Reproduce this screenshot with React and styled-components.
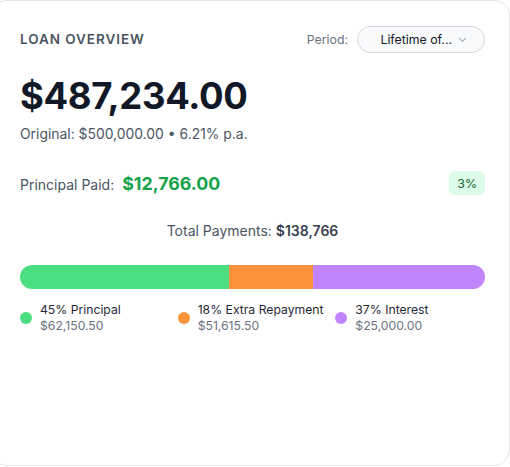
import React from "react";
import styled, { createGlobalStyle } from "styled-components";

const Global = createGlobalStyle`
  html, body { margin: 0; padding: 0; background: #ffffff; }
  body { font-family: Inter, "Noto Sans", sans-serif; overflow: hidden; }
  * { box-sizing: border-box; }
`;

const Card = styled.div`
  margin-left: -10px;
  width: 520px;
  height: 466px;
  background: #fff;
  border: 1px solid #e5e7eb;
  border-radius: 16px;
  padding: 24px 24px 24px 29px;
  display: flex;
  flex-direction: column;
`;

const Header = styled.div`
  display: flex;
  align-items: center;
  justify-content: space-between;
  height: 28px;
`;

const Title = styled.h2`
  margin: 0;
  font-size: 13.5px;
  font-weight: 600;
  letter-spacing: 0.07em;
  color: #4b5563;
  text-transform: uppercase;
`;

const PeriodWrap = styled.div`
  display: flex;
  align-items: center;
  gap: 9px;
`;

const PeriodLabel = styled.span`
  font-size: 12.3px;
  color: #6b7280;
`;

const Select = styled.div`
  width: 128px;
  height: 27px;
  border: 1px solid #d1d5db;
  border-radius: 14px;
  background: #f9fafb;
  display: flex;
  align-items: center;
  justify-content: flex-end;
  padding-right: 17px;
  gap: 6px;
  font-size: 12.3px;
  color: #111827;
`;

const Amount = styled.div`
  margin-top: 21px;
  font-size: 36.5px;
  line-height: 44px;
  font-weight: 700;
  color: #111827;
  letter-spacing: -0.01em;
`;

const Sub = styled.div`
  margin-top: 6px;
  font-size: 13.9px;
  line-height: 20px;
  color: #4b5563;
`;

const PaidRow = styled.div`
  margin-top: 27px;
  display: flex;
  align-items: center;
  justify-content: space-between;
  height: 24px;
`;

const PaidLeft = styled.div`
  display: flex;
  align-items: baseline;
  gap: 8px;
`;

const PaidLabel = styled.span`
  font-size: 14px;
  color: #4b5563;
`;

const PaidValue = styled.span`
  font-size: 17.8px;
  font-weight: 700;
  color: #16a34a;
`;

const Badge = styled.span`
  height: 24px;
  padding: 0 8px;
  display: inline-flex;
  align-items: center;
  border-radius: 6px;
  background: #dcfce7;
  color: #166534;
  font-size: 12.3px;
`;

const Total = styled.div`
  margin-top: 26px;
  text-align: center;
  font-size: 14px;
  line-height: 20px;
  color: #4b5563;
  b { font-weight: 600; color: #374151; }
`;

const Bar = styled.div`
  margin-top: 24px;
  height: 24px;
  border-radius: 12px;
  overflow: hidden;
  display: flex;
`;

const Segment = styled.div`
  height: 100%;
  background: ${(p) => p.$color};
`;

const Legend = styled.div`
  margin-top: 13px;
  display: grid;
  grid-template-columns: repeat(3, 1fr);
  gap: 8px;
`;

const LegendItem = styled.div`
  display: flex;
  align-items: center;
  gap: 8px;
`;

const Dot = styled.span`
  width: 12px;
  height: 12px;
  border-radius: 50%;
  background: ${(p) => p.$color};
  flex: none;
`;

const LegendText = styled.div`
  display: flex;
  flex-direction: column;
`;

const LegendLabel = styled.span`
  font-size: 12.2px;
  line-height: 16px;
  color: #1f2937;
`;

const LegendValue = styled.span`
  font-size: 12.2px;
  line-height: 16px;
  color: #6b7280;
`;

const items = [
  { pct: 45, label: "Principal", value: "$62,150.50", color: "#4ade80" },
  { pct: 18, label: "Extra Repayment", value: "$51,615.50", color: "#fb923c" },
  { pct: 37, label: "Interest", value: "$25,000.00", color: "#c084fc" },
];

export default function App() {
  return (
    <>
      <Global />
      <Card>
        <Header>
          <Title>Loan Overview</Title>
          <PeriodWrap>
            <PeriodLabel>Period:</PeriodLabel>
            <Select>
              <span>Lifetime of...</span>
              <svg width="9" height="9" viewBox="0 0 10 10" fill="none">
                <path d="M1.5 3.5L5 7L8.5 3.5" stroke="#9ca3af" strokeWidth="1.2" />
              </svg>
            </Select>
          </PeriodWrap>
        </Header>
        <Amount>$487,234.00</Amount>
        <Sub>Original: $500,000.00 • 6.21% p.a.</Sub>
        <PaidRow>
          <PaidLeft>
            <PaidLabel>Principal Paid:</PaidLabel>
            <PaidValue>$12,766.00</PaidValue>
          </PaidLeft>
          <Badge>3%</Badge>
        </PaidRow>
        <Total>
          Total Payments: <b>$138,766</b>
        </Total>
        <Bar>
          {items.map((it) => (
            <Segment key={it.label} $color={it.color} style={{ width: `${it.pct}%` }} />
          ))}
        </Bar>
        <Legend>
          {items.map((it) => (
            <LegendItem key={it.label}>
              <Dot $color={it.color} />
              <LegendText>
                <LegendLabel>
                  {it.pct}% {it.label}
                </LegendLabel>
                <LegendValue>{it.value}</LegendValue>
              </LegendText>
            </LegendItem>
          ))}
        </Legend>
      </Card>
    </>
  );
}
